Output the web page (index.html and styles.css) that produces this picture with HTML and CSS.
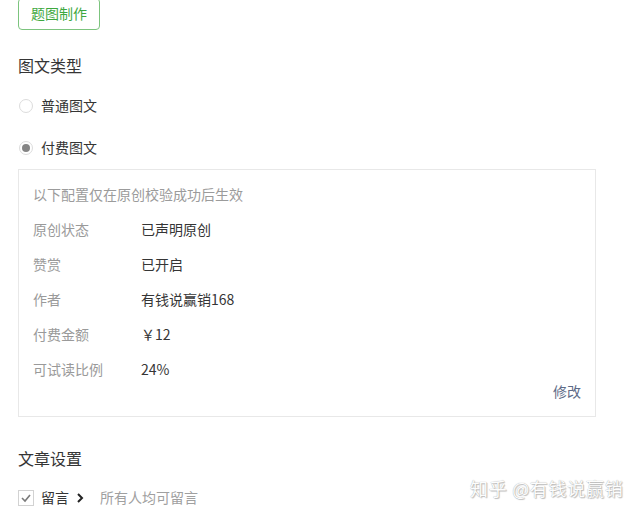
FILE: index.html
```html
<!DOCTYPE html>
<html lang="zh-CN">
<head>
<meta charset="utf-8">
<link rel="stylesheet" href="styles.css">
</head>
<body>
<div class="page">
  <button class="btn-green">题图制作</button>
  <div class="sec-title first">图文类型</div>
  <div class="radio-row r1"><span class="radio"></span><span class="radio-text">普通图文</span></div>
  <div class="radio-row r2"><span class="radio checked"></span><span class="radio-text">付费图文</span></div>
  <div class="box">
    <div class="row notice">以下配置仅在原创校验成功后生效</div>
    <div class="row"><span class="lbl">原创状态</span><span class="val">已声明原创</span></div>
    <div class="row"><span class="lbl">赞赏</span><span class="val">已开启</span></div>
    <div class="row"><span class="lbl">作者</span><span class="val">有钱说赢销168</span></div>
    <div class="row"><span class="lbl">付费金额</span><span class="val">￥12</span></div>
    <div class="row"><span class="lbl">可试读比例</span><span class="val">24%</span></div>
    <div class="box-foot"><a class="edit">修改</a></div>
  </div>
  <div class="sec-title second">文章设置</div>
  <div class="check-row">
    <span class="checkbox"><svg width="14" height="14" viewBox="0 0 14 14"><polyline points="3,7 6,10 11,4" fill="none" stroke="#7a7a7a" stroke-width="1.6"/></svg></span>
    <span class="check-text">留言</span>
    <svg class="chev" width="8" height="12" viewBox="0 0 8 12"><polyline points="2,2 6,6 2,10" fill="none" stroke="#222" stroke-width="2"/></svg>
    <span class="check-desc">所有人均可留言</span>
  </div>
  <div class="watermark">知乎 @有钱说赢销</div>
</div>
</body>
</html>
```
FILE: styles.css
```css
* { box-sizing: border-box; }
html, body { margin: 0; padding: 0; background: #fff; }
body {
  font-family: "Noto Sans CJK SC", "Microsoft YaHei", sans-serif;
  color: #353535;
  font-size: 14px;
  overflow: hidden;
  width: 640px;
  height: 515px;
}
.page {
  position: relative;
  padding-left: 18px;
  display: flex;
  flex-direction: column;
  align-items: flex-start;
  height: 515px;
}
.btn-green {
  margin-top: -2px;
  height: 32px;
  width: 82px;
  border: 1px solid #7cc47e;
  border-radius: 4px;
  background: #fff;
  color: #3ea83f;
  font-family: inherit;
  font-size: 14px;
  padding: 0 0 2px 0;
  line-height: 28px;
}
.sec-title {
  font-size: 16px;
  line-height: 22px;
  height: 22px;
  color: #353535;
}
.sec-title.first { margin-top: 24px; }
.sec-title.second { margin-top: 30px; }
.radio-row {
  display: flex;
  align-items: center;
  height: 20px;
}
.radio-row.r1 { margin-top: 20px; }
.radio-row.r2 { margin-top: 22px; }
.radio {
  width: 14px;
  height: 14px;
  border: 1px solid #dcdcdc;
  border-radius: 50%;
  margin-left: 1px;
  display: flex;
  align-items: center;
  justify-content: center;
}
.radio.checked::after {
  content: "";
  width: 8px;
  height: 8px;
  border-radius: 50%;
  background: #858585;
}
.radio-text { margin-left: 8px; line-height: 20px; padding-bottom: 2px; }
.box {
  margin-top: 11px;
  width: 578px;
  border: 1px solid #e8e8e8;
  padding: 6px 14px 15px 14px;
}
.row {
  display: flex;
  align-items: center;
  height: 35px;
  line-height: 20px;
}
.notice { color: #9b9b9b; }
.lbl { width: 108px; color: #9a9a9a; }
.val { color: #353535; }
.box-foot {
  margin-top: -5px;
  height: 20px;
  line-height: 20px;
  display: flex;
  justify-content: flex-end;
}
.edit { color: #5d6b87; }
.check-row {
  margin-top: 19px;
  display: flex;
  align-items: center;
  height: 20px;
}
.checkbox {
  width: 16px;
  height: 16px;
  border: 1px solid #d2d2d2;
  display: flex;
  align-items: center;
  justify-content: center;
}
.check-text { margin-left: 7px; line-height: 20px; padding-bottom: 2px; }
.chev { margin-left: 7px; }
.check-desc { margin-left: 16px; color: #a0a0a0; padding-bottom: 2px; }
.watermark {
  position: absolute;
  left: 470px;
  top: 476px;
  font-size: 18px;
  line-height: 24px;
  color: #fdfdfd;
  text-shadow: 0 0 1px #9a9a9a, 1px 1px 1px #c0c0c0;
  white-space: nowrap;
  letter-spacing: 0.7px;
}
```
